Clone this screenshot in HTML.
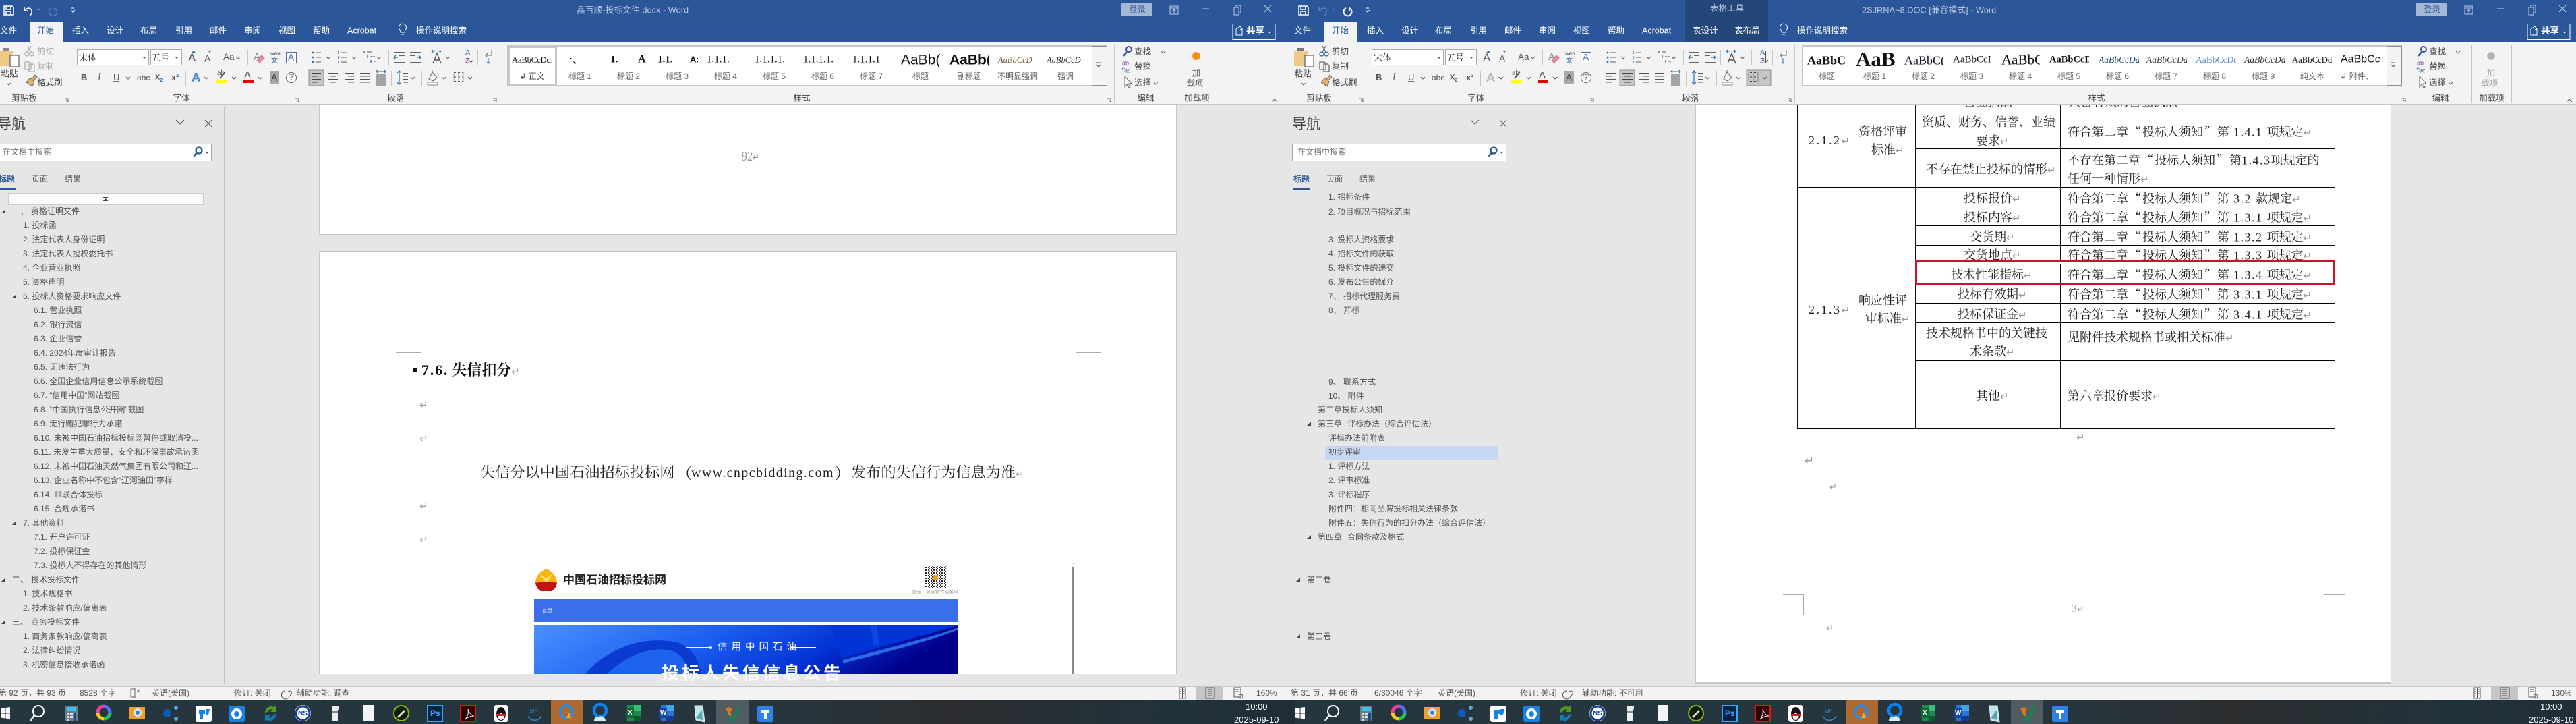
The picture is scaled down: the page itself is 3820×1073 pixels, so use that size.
<!DOCTYPE html>
<html lang="zh"><head><meta charset="utf-8"><title>Word</title>
<style>
*{box-sizing:border-box}
html,body{margin:0;padding:0;width:3820px;height:1073px;overflow:hidden;background:#e6e6e6}
body{position:relative;font-family:"Liberation Sans","Noto Sans CJK SC",sans-serif}
.w{position:absolute;top:0;width:1900px;height:1073px}
.a{position:absolute}
svg.a{overflow:visible}
p{position:absolute;margin:0;transform:translateY(-50%);white-space:nowrap;line-height:1.2;font-size:12.5px;color:#444}
.tt{color:#fff}
.lb{color:#666;font-size:12px;transform:translate(-50%,-50%)}
.g{color:#444;font-size:12.5px;transform:translate(-50%,-50%)}
.d{color:#a5a5a5}
.n{color:#555;font-size:12px}
.st{color:#555;font-size:12px}
.sm{font-family:"Liberation Serif","Noto Serif CJK SC",serif;overflow:hidden;color:#111;line-height:1.3}
.tri{position:absolute;width:0;height:0;border-left:6px solid transparent;border-bottom:6px solid #444}
.s{font-family:"Liberation Serif","Noto Serif CJK SC",serif;font-size:18px;color:#222}
.s.c{text-align:center}
.r{color:#999;font-family:"DejaVu Sans",sans-serif;font-size:15px;font-weight:400;font-style:normal}
em{font-style:normal;font-family:"Noto Serif CJK SC",serif;margin:0 1.5px}
.k{margin:0 6px;letter-spacing:1.5px}
</style></head><body>

<svg width="0" height="0" style="position:absolute"><defs>
<pattern id="qr" width="4" height="4" patternUnits="userSpaceOnUse"><rect width="4" height="4" fill="#fff"/><rect width="2" height="2" fill="#222"/><rect x="2" y="2" width="1" height="2" fill="#333"/></pattern>
<linearGradient id="bn" x1="0" y1="0" x2="1" y2="0.2"><stop offset="0" stop-color="#4b90ff"/><stop offset=".45" stop-color="#1b5ef0"/><stop offset=".75" stop-color="#0534d4"/><stop offset="1" stop-color="#00008a"/></linearGradient>
<g id="r" fill="none" stroke="#5c5c5c" stroke-width="1">
<path d="M105.5 66v86M449.5 66v86M741.5 66v86M1652.5 66v86M1745.5 66v86M1804.5 66v86" stroke="#c6c6c6"/>
<path d="M323.5 74v22M367.5 74v22M275.5 105v22M576.5 74v22M631.5 74v22M677.5 74v22M708.5 74v22M580.5 105v22M625.5 105v22" stroke="#c6c6c6"/>
<rect x="114.5" y="73.5" width="106" height="23" fill="#fff" stroke="#ababab"/>
<rect x="223.5" y="73.5" width="46" height="23" fill="#fff" stroke="#ababab"/>
<path d="M211 84h6l-3 3zM259 84h6l-3 3z" fill="#555" stroke="none"/>
<path d="M187 114l3 3 3-3M303 114l3 3 3-3M344 114l3 3 3-3M383 114l3 3 3-3M350 84l3 3 3-3M484 84l3 3 3-3M522 84l3 3 3-3M559 84l3 3 3-3M661 84l3 3 3-3M609 114l3 3 3-3M655 114l3 3 3-3M694 114l3 3 3-3M10 123l3 3 3-3M1722 76l3 3 3-3M1711 122l3 3 3-3"/>
<path d="M1626 96l3 3 3-3" /><path d="M1626 93h6"/>
<path d="M284 78l3-3 3 3z" fill="#2b6cb0" stroke="none"/><path d="M308 75l3 3 3-3z" fill="#2b6cb0" stroke="none"/>
<path d="M96 146h5v5M98 148l3 3M438 146h5v5M440 148l3 3M731 146h5v5M733 148l3 3M1642 146h5v5M1644 148l3 3" stroke="#666"/>
<path d="M1886 151l4-4 4 4"/>
<circle cx="464" cy="78" r="1.4" fill="#2b6cb0" stroke="none"/><circle cx="464" cy="85" r="1.4" fill="#2b6cb0" stroke="none"/><circle cx="464" cy="92" r="1.4" fill="#2b6cb0" stroke="none"/>
<path d="M468 78h8M468 85h8M468 92h8M506 78h8M506 85h8M506 92h8M544 77h7M549 84h7M554 91h4"/>
<path d="M502 76v4M502 83v4M502 90v4M540 75v4M545 82v4M550 89v4" stroke="#2b6cb0" stroke-width="1.3"/>
<path d="M584 77.5h16M592 82.5h8M592 87.5h8M584 92.5h16M608 77.5h16M608 82.5h8M608 87.5h8M608 92.5h16" stroke="#666"/>
<path d="M590 85h-6M587 82l-3 3 3 3M618 85h6M621 82l3 3-3 3" stroke="#2b6cb0" stroke-width="1.2"/>
<path d="M642 94l6-15 6 15M644.5 89h7" stroke="#555" stroke-width="1.4"/>
<path d="M640 76h5M654 76h-4M642 74l-2 2 2 2M652 74l2 2-2 2" stroke="#2b6cb0"/>
<path d="M698.5 75v17M695 89l3.5 3.5 3.5-3.5" stroke="#555"/>
<path d="M729 74v8h-8M723 79l-3 3 3 3" stroke="#666"/><path d="M724 86v8M722 92l2 2 2-2" stroke="#2b6cb0"/>
<path d="M462 108.5h14M462 113h9M462 117.5h14M462 122h9M486 108.5h15M489 113h9M486 117.5h15M489 122h9M511 108.5h14M516 113h9M511 117.5h14M516 122h9M534 108.5h14M534 113h14M534 117.5h14M534 122h14" stroke="#555"/>
<path d="M558 111h14M558 114h14M558 117h14M558 120h14M558 123h14M558 126h14" stroke="#555"/>
<path d="M558 106h14M560 104l-2 2 2 2M570 104l2 2-2 2" stroke="#2b6cb0"/>
<path d="M592 105v20M589 108l3-3 3 3M589 122l3 3 3-3" stroke="#2b6cb0" stroke-width="1.2"/>
<path d="M598 108.5h7M598 113h7M598 117.5h7M598 122h7" stroke="#555"/>
<path d="M636 117l5-10 7 8-6 5zM641 107v-3" stroke="#666"/><rect x="634" y="122" width="15" height="4" fill="#fff" stroke="#888"/>
<path d="M673 107.5h14v13h-14zM680 107.5v13M673 114h14" stroke-dasharray="1 1" stroke="#555"/><path d="M673 124.5h14" stroke="#555"/>
<rect x="321" y="119" width="16" height="4" fill="#ff0" stroke="none"/><rect x="360" y="119" width="16" height="4" fill="#e00" stroke="none"/>
<rect x="400" y="105" width="14" height="19" fill="#aaa" stroke="none"/>
<circle cx="432" cy="115" r="7.5" fill="#fff" stroke="#666"/>
<rect x="424.5" y="77.5" width="15" height="16" stroke="#4a6fa5" fill="#fff"/>
<path d="M381 90l7-8 4 4-7 7z" fill="#e98ca0" stroke="#d0708a"/>
<path d="M326 116l8-10" stroke="#555" stroke-width="2"/>
<circle cx="1674" cy="73" r="4" stroke="#2b579a" stroke-width="2"/><path d="M1671 77l-5 6" stroke="#2b579a" stroke-width="2.5"/>
<path d="M1668 102h-4l2-2M1664 102l2 2" stroke="#2b6cb0"/>
<path d="M1668 113v16l3-4 3 5 2-1-3-5h5z" fill="#fff" stroke="#666"/>
<path d="M45 115l6 6-3 7-9-6zM47 117l5-6 3 3-5 5" fill="#e0b070" stroke="#555" stroke-width=".8"/>
</g>
<g id="tb">
<path d="M1 1050l6.5-1v7h-6.5zM8.5 1049l6.5-1v8h-6.5zM1 1057.5h6.5v7l-6.5-1zM8.5 1057.5h6.5v8l-6.5-1z" fill="#fff"/>
<circle cx="57" cy="1054" r="8" fill="none" stroke="#fff" stroke-width="2"/><path d="M51 1060l-6 8" stroke="#fff" stroke-width="2.5"/>
<rect x="97" y="1046" width="18" height="23" fill="#6d7e8b"/><rect x="99" y="1048" width="14" height="5" fill="#39c5e8"/><path d="M99 1056h4v3h-4zM104 1056h4v3h-4zM99 1061h4v3h-4zM104 1061h4v3h-4zM99 1065h4v3h-4z" fill="#dde"/><path d="M109 1056h4v12h-4z" fill="#174a80"/>
<g fill="none" stroke-width="5"><circle cx="154" cy="1056" r="9" stroke="#23c55e" stroke-dasharray="14 43"/><circle cx="154" cy="1056" r="9" stroke="#f6c915" stroke-dasharray="14 43" stroke-dashoffset="-14"/><circle cx="154" cy="1056" r="9" stroke="#ee3d96" stroke-dasharray="14 43" stroke-dashoffset="-28"/><circle cx="154" cy="1056" r="9" stroke="#5b6ef0" stroke-dasharray="15 43" stroke-dashoffset="-42"/></g>
<rect x="192" y="1048" width="23" height="18" fill="#f1a02c"/><circle cx="204" cy="1056" r="6" fill="#dfe8f2"/><circle cx="204" cy="1056" r="3" fill="#3c7cc6"/>
<circle cx="248" cy="1057" r="6" fill="#0b5cb8"/><circle cx="261" cy="1049" r="3" fill="#5aa9dc"/><circle cx="261" cy="1065" r="3" fill="#5aa9dc"/>
<rect x="290" y="1046" width="24" height="24" rx="3" fill="#fff"/><path d="M295 1052h9v6h-3v7h-5v-7h-1zM305 1051h6l-2 8h-4z" fill="#1483e4"/>
<rect x="339" y="1046" width="24" height="24" rx="3" fill="#1c82e2"/><circle cx="351" cy="1058" r="6" fill="none" stroke="#fff" stroke-width="4"/>
<path d="M393 1056a9 9 0 0 1 13-8l3-2v9h-8l3-3a5 5 0 0 0-7 3" fill="#4f9a1a"/><path d="M409 1058a9 9 0 0 1-13 9l-3 2v-9h8l-3 3a5 5 0 0 0 7-3" fill="#0f7fb0"/>
<circle cx="449" cy="1057" r="12" fill="#fff"/><circle cx="449" cy="1057" r="10" fill="none" stroke="#123d94" stroke-width="3"/>
<path d="M492 1047h11v4l-2 1v17h-8v-17l-1-1z" fill="#eee"/><path d="M493 1054h8v3h-8z" fill="#888"/>
<rect x="539" y="1045" width="15" height="24" fill="#f4f4f4"/>
<circle cx="595" cy="1057" r="11" fill="#141a10" stroke="#7cc20b" stroke-width="2"/><path d="M589 1062l10-10 2 2-10 10z" fill="#d9e8c0"/>
<rect x="634" y="1046" width="22" height="23" fill="#06233d" stroke="#31a8ff" stroke-width="2"/>
<rect x="683" y="1046" width="22" height="23" fill="#2a0504" stroke="#e0180e" stroke-width="2"/><path d="M690 1066c4-5 5-10 4-15 2 6 5 9 9 10-5 0-9 1-13 5" fill="none" stroke="#eee"/>
<rect x="732" y="1045" width="22" height="25" rx="4" fill="#fff"/><ellipse cx="743" cy="1058" rx="7" ry="10" fill="#111"/><ellipse cx="743" cy="1062" rx="4.5" ry="5" fill="#fff"/><path d="M736 1058h14v3h-14z" fill="#e02020"/>
<path d="M783 1061a11 11 0 0 0 20 0" fill="none" stroke="#2c8ac8" stroke-width="1.5"/>
<rect x="817" y="1038" width="48" height="35" fill="#ac6a32"/>
<circle cx="840" cy="1055" r="9" fill="none" stroke="#2a8de8" stroke-width="3.5"/><path d="M840 1064l4-8 3 8z" fill="#f6b21a"/><path d="M844 1064h6l-3 5z" fill="#e2561e"/>
<circle cx="890" cy="1053" r="9" fill="none" stroke="#0a84f0" stroke-width="4.5"/><path d="M881 1068c0-5 4-6 7-5 2-3 9-2 10 5z" fill="#d7eefc"/>
<rect x="930" y="1045" width="20" height="24" fill="#1f8a4c"/><path d="M940 1045h10v8h-10z" fill="#36c07a"/><path d="M940 1061h10v8h-10z" fill="#10592e"/><rect x="928" y="1050" width="12" height="14" fill="#0e6b37"/>
<rect x="980" y="1045" width="20" height="24" fill="#2a72d4"/><path d="M988 1045h12v8h-12z" fill="#41a5ee"/><path d="M988 1061h12v8h-12z" fill="#103f91"/><rect x="977" y="1050" width="12" height="14" fill="#17479e"/>
<path d="M1030 1046h12l3 24-13-3z" fill="#bfe5ea" stroke="#e6eef0"/><path d="M1032 1064l10 3-1-15z" fill="#5aa5b5"/>
<rect x="1062" y="1038" width="48" height="35" fill="#4f5d63"/>
<path d="M1083 1052v14c0 3 6 3 6-1l7-18" fill="none" stroke="#0e8a4a" stroke-width="3"/><path d="M1076 1050c3-2 7-2 10 0l-3 5 2 6c-4 0-6-3-6-6z" fill="#e2741a"/>
<rect x="1123" y="1046" width="24" height="24" rx="3" fill="#2f80e9"/><path d="M1129 1052h12v4h-4v9h-4v-9h-4z" fill="#fff"/>
</g>
</defs></svg>

<!-- ======= WINDOW 1 ======= -->
<div class="w" style="left:0">
<div class="a" style="left:0;top:0;width:1910px;height:62px;background:#2b579a"></div>
<div class="a" style="left:0;top:62px;width:1910px;height:94px;background:#f3f3f3;border-bottom:2px solid #c6c6c6"></div>
<div class="a" style="left:44px;top:32px;width:49px;height:30px;background:#f3f3f3"></div>
<svg class="a" style="left:0;top:0" width="1910" height="62" fill="none" stroke="#fff" stroke-width="1.5">
<path d="M6 9h12l2 2v11H6zM9 9v5h7V9M9 22v-5h7v5"/>
<path d="M36 11v5h5M37 15c3-4 9-4 10 1 1 3-1 6-3 7"/><path d="M55 13l2 2 2-2" stroke="#8fa6ca" stroke-width="1"/>
<path d="M76 12a6 6 0 1 0 5 0v4" stroke="#5d7fb3"/>
<path d="M106 12h4M105 15l3 3 3-3" stroke-width="1"/>
<path d="M592 43a5.5 5.5 0 1 1 10 0c-1 2-2 3-2 5h-6c0-2-1-3-2-5zM595 51h4" stroke-width="1"/>
<path d="M1735 9h12v12h-12zM1735 12h12M1741 20v-6M1738 17l3-3 3 3" stroke="#bcc9df" stroke-width="1"/>
<path d="M1783 13h10M1830 11h7v11h-7zM1833 11v-3h7v11h-3M1875 8l10 10M1885 8l-10 10" stroke="#bcc9df" stroke-width="1"/>
<rect x="1828" y="35.5" width="63" height="23" stroke="#fff" stroke-width="1"/>
<path d="M1833 52v-9l6-4 3 4-3 1h3v8zM1881 47l2 2 2-2" stroke-width="1"/>
</svg>
<svg class="a" style="left:0;top:0" width="1910" height="160"><use href="#r"/>
<rect x="458" y="104" width="22" height="23" fill="#c6c6c6" stroke="#8f8f8f"/>
<path d="M462 108.5h14M462 113h9M462 117.5h14M462 122h9" stroke="#444"/>
<rect x="-1" y="75" width="20" height="23" fill="#efc988"/><rect x="4" y="71" width="10" height="5" fill="#888"/><rect x="15" y="82" width="13" height="17" fill="#fff" stroke="#444"/>
<g fill="none" stroke="#b0b0b0" stroke-width="1.3"><circle cx="40" cy="80" r="3"/><circle cx="47" cy="80" r="3"/><path d="M41 77l5-9M46 77l-5-9"/><path d="M37 92h7l2 2v9h-9zM43 95h6l2 2v9h-8z"/></g>
<rect x="753" y="68" width="888" height="59" fill="#fff" stroke="#c6c6c6" stroke-width="2"/>
<rect x="754.5" y="69.5" width="70" height="56" fill="#fff" stroke="#c6c6c6" stroke-width="3"/>
<rect x="1619.5" y="68.5" width="22" height="58" fill="#f3f3f3" stroke="#8f8f8f"/>
<path d="M1626 93h6M1626 96l3 3 3-3" fill="none" stroke="#555"/>
<circle cx="1774" cy="83" r="6" fill="#f7921e"/>
<rect x="1663" y="5" width="46" height="19" fill="#a4b7d3"/>
</svg>

<p class="tt" style="left:0;top:46px">文件</p><p style="left:55px;top:46px;color:#2b579a">开始</p>
<p class="tt" style="left:107px;top:46px">插入</p><p class="tt" style="left:158px;top:46px">设计</p><p class="tt" style="left:208px;top:46px">布局</p><p class="tt" style="left:260px;top:46px">引用</p><p class="tt" style="left:311px;top:46px">邮件</p><p class="tt" style="left:362px;top:46px">审阅</p><p class="tt" style="left:413px;top:46px">视图</p><p class="tt" style="left:464px;top:46px">帮助</p><p class="tt" style="left:515px;top:46px">Acrobat</p><p class="tt" style="left:617px;top:46px">操作说明搜索</p>
<p style="left:855px;top:15px;color:#b9c7dd;font-size:12.8px">鑫百顺-投标文件.docx  -  Word</p>
<p style="left:1674px;top:14.5px;color:#2b579a;font-size:12.5px">登录</p>
<p class="tt" style="left:1848px;top:46px;font-weight:700;font-size:13.5px">共享</p>

<p class="g" style="left:14px;top:110px">粘贴</p>
<p class="d" style="left:55px;top:77px">剪切</p><p class="d" style="left:55px;top:99px">复制</p><p style="left:55px;top:123px">格式刷</p>
<p class="g" style="left:36px;top:146px">剪贴板</p><p class="g" style="left:269px;top:146px">字体</p><p class="g" style="left:587px;top:146px">段落</p><p class="g" style="left:1189px;top:146px">样式</p><p class="g" style="left:1699px;top:146px">编辑</p><p class="g" style="left:1775px;top:146px">加载项</p>

<p style="left:117px;top:85px;font-size:13px;color:#222;font-family:'Noto Serif CJK SC',serif">宋体</p><p style="left:225px;top:85px;font-size:13px;color:#222;font-family:'Noto Serif CJK SC',serif">五号</p>
<p style="left:279px;top:86px;font-size:17px;color:#555">A</p><p style="left:303px;top:87px;font-size:14px;color:#555">A</p><p style="left:331px;top:85px;font-size:13.5px;color:#555">Aa</p><p style="left:376px;top:85px;font-size:15px;color:#888">A</p><p style="left:401px;top:80px;font-size:8px;color:#444">wén</p><p style="left:402px;top:91px;font-size:10px;color:#2b6cb0">文</p><p style="left:427px;top:85px;font-size:14px;color:#4a6fa5">A</p>
<p style="left:120px;top:115px;font-weight:700;color:#555;font-size:13px">B</p><p style="left:145px;top:115px;font-style:italic;color:#555;font-family:'Liberation Serif';font-size:14px">I</p><p style="left:168px;top:115px;text-decoration:underline;color:#555;font-size:13px">U</p><p style="left:203px;top:115px;font-size:12px;color:#555;text-decoration:line-through">abc</p><p style="left:230px;top:115px;font-size:13px;font-weight:700;color:#555">x<sub style="font-size:7px;color:#2b6cb0">2</sub></p><p style="left:254px;top:115px;font-size:13px;font-weight:700;color:#555">x<sup style="font-size:7px;color:#2b6cb0">2</sup></p>
<p style="left:285px;top:115px;font-size:17px;color:#fff;-webkit-text-stroke:1px #2b6cb0;text-shadow:0 0 3px #9cc3ea">A</p><p style="left:322px;top:109px;font-size:10px;color:#555">ab</p><p style="left:362px;top:112px;font-size:15px;color:#444">A</p><p style="left:402px;top:115px;font-size:14px;color:#333">A</p><p style="left:427.5px;top:115px;font-size:9px;color:#555">字</p>
<p style="left:690px;top:79px;font-size:11px;color:#2b6cb0">A</p><p style="left:690px;top:91px;font-size:11px;color:#7a3fb0">Z</p>
<p style="left:1664px;top:94px;font-size:9px;color:#7a3fb0">ab</p><p style="left:1667px;top:105px;font-size:9px;color:#2b6cb0">ac</p>
<p style="left:1682px;top:77px">查找</p><p style="left:1682px;top:99px">替换</p><p style="left:1682px;top:123px">选择</p>
<p class="g" style="left:1774px;top:109px;color:#555">加</p><p class="g" style="left:1772px;top:124px;color:#555">载项</p>

<!-- gallery window 1 -->
<p class="sm" style="left:759px;top:89px;width:60px;font-size:12.7px;letter-spacing:-.2px;color:#111">AaBbCcDdI</p>
<p class="sm" style="left:834px;top:88px;width:30px;font-size:15px;font-weight:700;font-family:'Noto Serif CJK SC',serif">一、</p>
<p class="sm" style="left:905px;top:89px;width:20px;font-size:15px;font-weight:700">1.</p><p class="sm" style="left:946px;top:89px;width:14px;font-size:16px;font-weight:700">A</p>
<p class="sm" style="left:975px;top:89px;width:30px;font-size:15px;font-weight:700">1.1.</p><p class="sm" style="left:1023px;top:89px;width:12px;font-size:13px;font-weight:700;font-family:'Liberation Sans'">A:</p>
<p class="sm" style="left:1048px;top:89px;width:46px;font-size:15px">1.1.1.</p><p class="sm" style="left:1119px;top:89px;width:60px;font-size:15px">1.1.1.1.</p><p class="sm" style="left:1191px;top:89px;width:60px;font-size:15px">1.1.1.1.</p><p class="sm" style="left:1264px;top:89px;width:58px;font-size:15px">1.1.1.1</p>
<p class="sm" style="left:1336px;top:89px;width:58px;font-size:21px;font-family:'Liberation Sans'">AaBb(</p><p class="sm" style="left:1408px;top:89px;width:58px;font-size:21px;font-family:'Liberation Sans';font-weight:700">AaBb(</p>
<p class="sm" style="left:1480px;top:89px;width:59px;font-size:12.5px;font-style:italic;color:#7a5a40">AaBbCcD</p><p class="sm" style="left:1552px;top:89px;width:58px;font-size:12.5px;font-style:italic;color:#333">AaBbCcD</p>
<p class="lb" style="left:789px;top:113px;color:#444">↲ 正文</p><p class="lb" style="left:860px;top:113px">标题 1</p><p class="lb" style="left:932px;top:113px">标题 2</p><p class="lb" style="left:1004px;top:113px">标题 3</p><p class="lb" style="left:1076px;top:113px">标题 4</p><p class="lb" style="left:1148px;top:113px">标题 5</p><p class="lb" style="left:1220px;top:113px">标题 6</p><p class="lb" style="left:1292px;top:113px">标题 7</p><p class="lb" style="left:1365px;top:113px">标题</p><p class="lb" style="left:1437px;top:113px">副标题</p><p class="lb" style="left:1509px;top:113px">不明显强调</p><p class="lb" style="left:1580px;top:113px">强调</p>

<!-- nav window 1 -->
<div class="a" style="left:331.5px;top:159px;width:1px;height:855px;background:#c2c2c2"></div>
<p style="left:-4px;top:184px;font-size:21px;color:#444">导航</p>
<svg class="a" style="left:0;top:0" width="332" height="300" fill="none"><path d="M261 178l6 6 6-6M304 178l10 10M314 178l-10 10" stroke="#555"/>
<rect x="-3.5" y="213.5" width="317" height="25" fill="#fff" stroke="#ababab"/>
<circle cx="295" cy="223" r="4.5" stroke="#2b579a" stroke-width="2.3"/><path d="M291.5 227l-4 4.5" stroke="#2b579a" stroke-width="2.6"/><path d="M305 225l2 2 2-2" stroke="#444"/>
<rect x="-3" y="279" width="26" height="3" fill="#2b579a"/></svg>
<p style="left:4px;top:224.5px;font-size:12px;color:#777">在文档中搜索</p>
<p style="left:-2px;top:264.5px;font-size:12px;color:#2b579a;font-weight:700">标题</p><p class="n" style="left:47px;top:264.5px">页面</p><p class="n" style="left:96px;top:264.5px">结果</p>
<div class="a" style="left:12px;top:286px;width:290px;height:18px;background:#fbfbfb;border:1px solid #ccc"></div>
<svg class="a" style="left:0;top:0" width="320" height="310"><path d="M153 292h7v1.5h-7zM156.5 294l-4 4h8z" fill="#444"/></svg>
<div class="tri" style="left:2px;top:310px"></div><div class="tri" style="left:18px;top:436px"></div><div class="tri" style="left:18px;top:772px"></div><div class="tri" style="left:2px;top:856px"></div><div class="tri" style="left:2px;top:919px"></div>
<p class="n" style="left:18px;top:313px">一、</p><p class="n" style="left:46px;top:313px">资格证明文件</p>
<p class="n" style="left:34px;top:334px">1. 投标函</p><p class="n" style="left:34px;top:355px">2. 法定代表人身份证明</p><p class="n" style="left:34px;top:376px">3. 法定代表人授权委托书</p><p class="n" style="left:34px;top:397px">4. 企业营业执照</p><p class="n" style="left:34px;top:418px">5. 资格声明</p><p class="n" style="left:34px;top:439px">6. 投标人资格要求响应文件</p>
<p class="n" style="left:50px;top:460px">6.1. 营业执照</p><p class="n" style="left:50px;top:481px">6.2. 银行资信</p><p class="n" style="left:50px;top:502px">6.3. 企业信誉</p><p class="n" style="left:50px;top:523px">6.4. 2024年度审计报告</p><p class="n" style="left:50px;top:544px">6.5. 无违法行为</p><p class="n" style="left:50px;top:565px">6.6. 全国企业信用信息公示系统截图</p><p class="n" style="left:50px;top:586px">6.7. “信用中国”网站截图</p><p class="n" style="left:50px;top:607px">6.8. “中国执行信息公开网”截图</p><p class="n" style="left:50px;top:628px">6.9. 无行贿犯罪行为承诺</p><p class="n" style="left:50px;top:649px">6.10. 未被中国石油招标投标网暂停或取消投...</p><p class="n" style="left:50px;top:670px">6.11. 未发生重大质量、安全和环保事故承诺函</p><p class="n" style="left:50px;top:691px">6.12. 未被中国石油天然气集团有限公司和辽...</p><p class="n" style="left:50px;top:712px">6.13. 企业名称中不包含“辽河油田”字样</p><p class="n" style="left:50px;top:733px">6.14. 非联合体投标</p><p class="n" style="left:50px;top:754px">6.15. 合规承诺书</p>
<p class="n" style="left:34px;top:775px">7. 其他资料</p><p class="n" style="left:50px;top:796px">7.1. 开户许可证</p><p class="n" style="left:50px;top:817px">7.2. 投标保证金</p><p class="n" style="left:50px;top:838px">7.3. 投标人不得存在的其他情形</p>
<p class="n" style="left:18px;top:859px">二、</p><p class="n" style="left:46px;top:859px">技术投标文件</p><p class="n" style="left:34px;top:880px">1. 技术规格书</p><p class="n" style="left:34px;top:901px">2. 技术条款响应/偏离表</p>
<p class="n" style="left:18px;top:922px">三、</p><p class="n" style="left:46px;top:922px">商务投标文件</p><p class="n" style="left:34px;top:943px">1. 商务条款响应/偏离表</p><p class="n" style="left:34px;top:964px">2. 法律纠纷情况</p><p class="n" style="left:34px;top:985px">3. 机密信息接收承诺函</p>
</div>

<!-- ======= WINDOW 2 ======= -->
<div class="w" style="left:1920px">
<div class="a" style="left:-10px;top:0;width:1910px;height:62px;background:#2b579a"></div>
<div class="a" style="left:578px;top:0;width:124px;height:62px;background:#234779"></div>
<div class="a" style="left:-10px;top:62px;width:1910px;height:94px;background:#f3f3f3;border-bottom:2px solid #c6c6c6"></div>
<div class="a" style="left:44px;top:32px;width:49px;height:30px;background:#f3f3f3"></div>
<svg class="a" style="left:0;top:0" width="1900" height="62" fill="none" stroke="#fff" stroke-width="1.5">
<path d="M6 9h12l2 2v11H6zM9 9v5h7V9M9 22v-5h7v5"/>
<path d="M36 11v5h5M37 15c3-4 9-4 10 1 1 3-1 6-3 7" stroke="#5d7fb3"/><path d="M55 13l2 2 2-2" stroke="#5d7fb3" stroke-width="1"/>
<path d="M76 12a6 6 0 1 0 5 0v4" stroke-width="2"/>
<path d="M106 12h4M105 15l3 3 3-3" stroke-width="1"/>
<path d="M720 43a5.5 5.5 0 1 1 10 0c-1 2-2 3-2 5h-6c0-2-1-3-2-5zM723 51h4" stroke-width="1"/>
<path d="M1735 9h12v12h-12zM1735 12h12M1741 20v-6M1738 17l3-3 3 3" stroke="#bcc9df" stroke-width="1"/>
<path d="M1783 13h10M1830 11h7v11h-7zM1833 11v-3h7v11h-3M1875 8l10 10M1885 8l-10 10" stroke="#bcc9df" stroke-width="1"/>
<rect x="1828" y="35.5" width="63" height="23" stroke="#fff" stroke-width="1"/>
<path d="M1833 52v-9l6-4 3 4-3 1h3v8zM1881 47l2 2 2-2" stroke-width="1"/>
</svg>
<svg class="a" style="left:0;top:0" width="1900" height="160"><use href="#r"/>
<rect x="482" y="104" width="22" height="23" fill="#c6c6c6" stroke="#8f8f8f"/>
<path d="M486 108.5h15M489 113h9M486 117.5h15M489 122h9" stroke="#444"/>
<rect x="670" y="104" width="36" height="23" fill="#c6c6c6" stroke="#8f8f8f"/>
<path d="M673 107.5h14v13h-14zM680 107.5v13M673 114h14" stroke-dasharray="1 1" stroke="#444" fill="none"/><path d="M673 124.5h14M694 114l3 3 3-3" stroke="#444" fill="none"/>
<rect x="-1" y="75" width="20" height="23" fill="#efc988"/><rect x="4" y="71" width="10" height="5" fill="#777"/><rect x="15" y="82" width="13" height="17" fill="#fff" stroke="#444"/>
<g fill="none" stroke-width="1.3"><circle cx="40" cy="80" r="3" stroke="#2b6cb0"/><circle cx="47" cy="80" r="3" stroke="#2b6cb0"/><path d="M41 77l5-9M46 77l-5-9" stroke="#777"/><path d="M37 92h7l2 2v9h-9zM43 95h6l2 2v9h-8z" stroke="#666"/></g>
<rect x="753" y="68" width="888" height="59" fill="#fff" stroke="#c6c6c6" stroke-width="2"/>
<rect x="1619.5" y="68.5" width="22" height="58" fill="#f3f3f3" stroke="#8f8f8f"/>
<path d="M1626 93h6M1626 96l3 3 3-3" fill="none" stroke="#555"/>
<circle cx="1774" cy="83" r="6" fill="#b5b5b5"/>
<rect x="1663" y="5" width="46" height="19" fill="#a4b7d3"/>
</svg>

<p class="tt" style="left:-1px;top:46px">文件</p><p style="left:55px;top:46px;color:#2b579a">开始</p>
<p class="tt" style="left:107px;top:46px">插入</p><p class="tt" style="left:158px;top:46px">设计</p><p class="tt" style="left:208px;top:46px">布局</p><p class="tt" style="left:260px;top:46px">引用</p><p class="tt" style="left:311px;top:46px">邮件</p><p class="tt" style="left:362px;top:46px">审阅</p><p class="tt" style="left:413px;top:46px">视图</p><p class="tt" style="left:464px;top:46px">帮助</p><p class="tt" style="left:515px;top:46px">Acrobat</p>
<p class="tt" style="left:590px;top:46px">表设计</p><p class="tt" style="left:652px;top:46px">表布局</p><p class="tt" style="left:745px;top:46px">操作说明搜索</p>
<p style="left:616px;top:13px;color:#b9c7dd;font-size:12.5px">表格工具</p>
<p style="left:841px;top:15px;color:#b9c7dd;font-size:12.8px">2SJRNA~8.DOC [兼容模式]  -  Word</p>
<p style="left:1674px;top:14.5px;color:#2b579a">登录</p>
<p class="tt" style="left:1848px;top:46px;font-weight:700;font-size:13.5px">共享</p>

<p class="g" style="left:12px;top:110px">粘贴</p>
<p style="left:55px;top:77px">剪切</p><p style="left:55px;top:99px">复制</p><p style="left:55px;top:123px">格式刷</p>
<p class="g" style="left:36px;top:146px">剪贴板</p><p class="g" style="left:269px;top:146px">字体</p><p class="g" style="left:587px;top:146px">段落</p><p class="g" style="left:1189px;top:146px">样式</p><p class="g" style="left:1699px;top:146px">编辑</p><p class="g" style="left:1775px;top:146px">加载项</p>

<p style="left:117px;top:85px;font-size:13px;color:#222;font-family:'Noto Serif CJK SC',serif">宋体</p><p style="left:225px;top:85px;font-size:13px;color:#222;font-family:'Noto Serif CJK SC',serif">五号</p>
<p style="left:279px;top:86px;font-size:17px;color:#555">A</p><p style="left:303px;top:87px;font-size:14px;color:#555">A</p><p style="left:331px;top:85px;font-size:13.5px;color:#555">Aa</p><p style="left:376px;top:85px;font-size:15px;color:#888">A</p><p style="left:401px;top:80px;font-size:8px;color:#444">wén</p><p style="left:402px;top:91px;font-size:10px;color:#2b6cb0">文</p><p style="left:427px;top:85px;font-size:14px;color:#4a6fa5">A</p>
<p style="left:120px;top:115px;font-weight:700;color:#555;font-size:13px">B</p><p style="left:145px;top:115px;font-style:italic;color:#555;font-family:'Liberation Serif';font-size:14px">I</p><p style="left:168px;top:115px;text-decoration:underline;color:#555;font-size:13px">U</p><p style="left:203px;top:115px;font-size:12px;color:#555;text-decoration:line-through">abc</p><p style="left:230px;top:115px;font-size:13px;font-weight:700;color:#555">x<sub style="font-size:7px;color:#2b6cb0">2</sub></p><p style="left:254px;top:115px;font-size:13px;font-weight:700;color:#555">x<sup style="font-size:7px;color:#2b6cb0">2</sup></p>
<p style="left:285px;top:115px;font-size:17px;color:#f6f6f6;-webkit-text-stroke:1px #a8a8a8">A</p><p style="left:322px;top:109px;font-size:10px;color:#555">ab</p><p style="left:362px;top:112px;font-size:15px;color:#444">A</p><p style="left:402px;top:115px;font-size:14px;color:#333">A</p><p style="left:427.5px;top:115px;font-size:9px;color:#555">字</p>
<p style="left:690px;top:79px;font-size:11px;color:#2b6cb0">A</p><p style="left:690px;top:91px;font-size:11px;color:#7a3fb0">Z</p>
<p style="left:1664px;top:94px;font-size:9px;color:#7a3fb0">ab</p><p style="left:1667px;top:105px;font-size:9px;color:#2b6cb0">ac</p>
<p style="left:1682px;top:77px">查找</p><p style="left:1682px;top:99px">替换</p><p style="left:1682px;top:123px">选择</p>
<p class="g d" style="left:1774px;top:109px;color:#a5a5a5">加</p><p class="g d" style="left:1772px;top:124px;color:#a5a5a5">载项</p>

<p class="sm" style="left:760px;top:90px;width:58px;font-size:18px;font-weight:700">AaBbC(</p>
<p class="sm" style="left:832px;top:87px;width:59px;font-size:31px;font-weight:700;height:38px">AaBl</p>
<p class="sm" style="left:904px;top:90px;width:58px;font-size:18px;color:#112">AaBbC(</p>
<p class="sm" style="left:976px;top:89px;width:59px;font-size:15px">AaBbCcI</p>
<p class="sm" style="left:1048px;top:89px;width:57px;font-size:21px">AaBbC(</p>
<p class="sm" style="left:1119px;top:89px;width:59px;font-size:14.5px;font-weight:700">AaBbCcD</p>
<p class="sm" style="left:1192px;top:89px;width:60px;font-size:13.5px;font-style:italic;color:#2a4f80">AaBbCcDd.</p>
<p class="sm" style="left:1263px;top:89px;width:60px;font-size:13.5px;font-style:italic;color:#444">AaBbCcDd.</p>
<p class="sm" style="left:1336px;top:89px;width:60px;font-size:13.5px;color:#5b8fd0">AaBbCcDd</p>
<p class="sm" style="left:1408px;top:89px;width:60px;font-size:13.5px;font-style:italic;color:#333">AaBbCcDd.</p>
<p class="sm" style="left:1479px;top:89px;width:60px;font-size:12.7px">AaBbCcDdI</p>
<p class="sm" style="left:1551px;top:89px;width:60px;font-size:16px;font-family:'Liberation Sans'">AaBbCc</p>
<p class="lb" style="left:789px;top:113px">标题</p><p class="lb" style="left:860px;top:113px">标题 1</p><p class="lb" style="left:932px;top:113px">标题 2</p><p class="lb" style="left:1004px;top:113px">标题 3</p><p class="lb" style="left:1076px;top:113px">标题 4</p><p class="lb" style="left:1148px;top:113px">标题 5</p><p class="lb" style="left:1220px;top:113px">标题 6</p><p class="lb" style="left:1292px;top:113px">标题 7</p><p class="lb" style="left:1364px;top:113px">标题 8</p><p class="lb" style="left:1436px;top:113px">标题 9</p><p class="lb" style="left:1509px;top:113px">纯文本</p><p class="lb" style="left:1575px;top:113px">↲ 附件、</p>

<!-- nav 2 -->
<div class="a" style="left:331.5px;top:159px;width:1px;height:855px;background:#c2c2c2"></div>
<p style="left:-4px;top:184px;font-size:21px;color:#444">导航</p>
<svg class="a" style="left:0;top:0" width="332" height="300" fill="none"><path d="M261 178l6 6 6-6M304 178l10 10M314 178l-10 10" stroke="#555"/>
<rect x="-3.5" y="213.5" width="317" height="25" fill="#fff" stroke="#ababab"/>
<circle cx="295" cy="223" r="4.5" stroke="#2b579a" stroke-width="2.3"/><path d="M291.5 227l-4 4.5" stroke="#2b579a" stroke-width="2.6"/><path d="M305 225l2 2 2-2" stroke="#444"/>
<rect x="-3" y="279" width="26" height="3" fill="#2b579a"/></svg>
<p style="left:4px;top:224.5px;font-size:12px;color:#777">在文档中搜索</p>
<p style="left:-2px;top:264.5px;font-size:12px;color:#2b579a;font-weight:700">标题</p><p class="n" style="left:47px;top:264.5px">页面</p><p class="n" style="left:96px;top:264.5px">结果</p>
<div class="a" style="left:45px;top:661px;width:256px;height:20px;background:#c5d7f1"></div>
<div class="tri" style="left:18px;top:625px"></div><div class="tri" style="left:18px;top:793px"></div><div class="tri" style="left:2px;top:856px"></div><div class="tri" style="left:2px;top:940px"></div>
<p class="n" style="left:50px;top:292px">1. 招标条件</p><p class="n" style="left:50px;top:313.5px">2. 项目概况与招标范围</p><p class="n" style="left:50px;top:355px">3. 投标人资格要求</p><p class="n" style="left:50px;top:376px">4. 招标文件的获取</p><p class="n" style="left:50px;top:397px">5. 投标文件的递交</p><p class="n" style="left:50px;top:418px">6. 发布公告的媒介</p><p class="n" style="left:50px;top:439px">7、 招标代理服务费</p><p class="n" style="left:50px;top:460px">8、 开标</p><p class="n" style="left:50px;top:565.5px">9、 联系方式</p><p class="n" style="left:50px;top:586.5px">10、 附件</p>
<p class="n" style="left:34px;top:607px">第二章投标人须知</p><p class="n" style="left:34px;top:628px">第三章</p><p class="n" style="left:78px;top:628px">评标办法（综合评估法）</p>
<p class="n" style="left:50px;top:649px">评标办法前附表</p><p class="n" style="left:50px;top:670px">初步评审</p><p class="n" style="left:50px;top:691px">1. 评标方法</p><p class="n" style="left:50px;top:712px">2. 评审标准</p><p class="n" style="left:50px;top:733px">3. 评标程序</p><p class="n" style="left:50px;top:754px">附件四：相同品牌投标相关法律条款</p><p class="n" style="left:50px;top:775px">附件五：失信行为的扣分办法（综合评估法）</p>
<p class="n" style="left:34px;top:796px">第四章</p><p class="n" style="left:78px;top:796px">合同条款及格式</p><p class="n" style="left:18px;top:859px">第二卷</p><p class="n" style="left:18px;top:943px">第三卷</p>
</div>

<!-- ======= DOC AREAS (global coordinates) ======= -->
<div class="a" id="doc" style="left:0;top:0;width:3820px;height:1073px;clip-path:inset(156px 0 57px 0)">
<div class="a" style="left:473px;top:156px;width:1272px;height:192px;background:#fff;border:1px solid #c6c6c6;border-top:0"></div>
<div class="a" style="left:473px;top:372px;width:1272px;height:627px;background:#fff;border:1px solid #c6c6c6;border-bottom:0"></div>
<div class="a" style="left:2514px;top:156px;width:1032px;height:857px;background:#fff;border:1px solid #c6c6c6;border-top:0;border-bottom:2px solid #c6c6c6"></div>

<svg class="a" style="left:0;top:0" width="3820" height="1073" fill="none">
<path d="M588 198.5h36.5V236M1632 198.5h-36.5V236M587 522.5h37.5V485M1633 522.5h-37.5V485" stroke="#aaa"/>
<path d="M2644 881.5h30.5V912M3477 881.5h-30.5V912" stroke="#aaa"/>
<path d="M1591.5 840v159" stroke="#888" stroke-width="3"/><path d="M1591.5 834v2" stroke="#aaa"/>
<g stroke="#000" stroke-width="1">
<path d="M2665.5 150v485.500M2743.5 150v485.500M2840.5 150v485.500M3055.5 150v485.500M3462.5 150v485.500" stroke="#111"/>
<path d="M2840 164.5h622M2840 220.5h622M2665 277.5h797M2840 305.5h622M2840 334.5h622M2840 363.5h622M2840 421.5h622M2840 449.5h622M2840 477.5h622M2840 534.5h622M2665 635.5h797"/>
</g>
</svg>

<p class="s" style="left:1100px;top:231.5px;font-size:20px;color:#999;font-family:'Liberation Serif';transform:translateY(-50%) scaleX(.8);transform-origin:left">92<span class="r">↵</span></p>
<div class="a" style="left:612px;top:546px;width:7px;height:6px;background:#111"></div>
<p class="s" style="left:625px;top:549px;font-size:22px;font-weight:700;color:#111"><span style="letter-spacing:1.8px;margin-right:5px">7.6.</span>失信扣分<span class="r">↵</span></p>
<p class="r" style="left:622px;top:599.5px">↵</p><p class="r" style="left:622px;top:649.5px">↵</p><p class="r" style="left:622px;top:749.5px">↵</p><p class="r" style="left:622px;top:799.5px">↵</p>
<p class="s" style="left:712px;top:701px;font-size:22.2px">失信分以中国石油招标投标网</p>
<p class="s" style="left:1004px;top:701px;font-size:22.2px;font-family:'Noto Serif CJK SC',serif">（</p>
<p class="s" style="left:1025px;top:701px;font-size:20px;letter-spacing:1.4px;font-family:'Liberation Serif',serif">www.cnpcbidding.com</p>
<p class="s" style="left:1238px;top:701px;font-size:22.2px;font-family:'Noto Serif CJK SC',serif">）</p>
<p class="s" style="left:1262px;top:701px;font-size:22.2px">发布的失信行为信息为准<span class="r">↵</span></p>

<svg class="a" style="left:0;top:0" width="1700" height="1000">
<path d="M810 843c-10 4-16 12-16 21h32c0-9-6-17-16-21z" fill="#f5b616"/><path d="M800 850l10 14 10-14-10 7z" fill="#f8e26a"/><path d="M794 864c5-2 27-2 32 0-1 7-6 12-9 12h-14c-3 0-8-5-9-12z" fill="#c01212"/>
<rect x="1371" y="839" width="32" height="32" fill="url(#qr)"/><rect x="1384" y="852" width="7" height="7" fill="#f0a020"/>
<rect x="792" y="888" width="629" height="34" fill="#3a6eea"/>
<rect x="792" y="927" width="629" height="72" fill="url(#bn)"/>
<path d="M868 999c32-38 82-54 122-49 30 2 45 20 50 49z" fill="#0a3ad0"/><path d="M900 999c30-28 62-40 90-36 18 3 28 16 32 36z" fill="#1e63ee"/>
<path d="M1232 927l16 48 173-48z" fill="#0034d6"/><path d="M1290 927l6 30 8-2-4-28z" fill="#0a48e0"/>
<path d="M1250 978c60-16 120-30 171-48v3c-50 20-110 34-171 50z" fill="#3e8bff" opacity=".7"/>
<path d="M1017 959.5h37M1175 959.5h35" stroke="#fff"/><circle cx="1054" cy="960" r="2" fill="#fff"/><circle cx="1175" cy="960" r="2" fill="#fff"/>
</svg>
<p style="left:835px;top:860px;font-size:17px;font-weight:700;color:#222">中国石油招标投标网</p>
<p style="left:1353px;top:879px;font-size:6.8px;color:#999">能源一号网官方服务号</p>
<p style="left:804px;top:904.5px;font-size:7.5px;color:#eee">首页</p>
<p style="left:1064px;top:960px;font-size:14.5px;letter-spacing:6px;color:#fff">信用中国石油</p>
<p style="left:981px;top:998px;font-size:26px;letter-spacing:4px;font-weight:700;color:#fff">投标人失信信息公告</p>

<p class="s" style="left:2682px;top:209px;font-size:18px;letter-spacing:2.5px">2.1.2<span class="r">↵</span></p>
<p class="s" style="left:2682px;top:460px;font-size:18px;letter-spacing:2.5px">2.1.3<span class="r">↵</span></p>
<p class="s" style="left:2756px;top:196px">资格评审</p><p class="s" style="left:2775px;top:223px">标准<span class="r">↵</span></p>
<p class="s" style="left:2756px;top:446px">响应性评</p><p class="s" style="left:2766px;top:473px">审标准<span class="r">↵</span></p>
<p class="s" style="left:2912px;top:152px">营业执照</p><p class="s" style="left:3067px;top:152px">具备有效的营业执照</p>

<p class="s" style="left:2850px;top:182px">资质、财务、信誉、业绩</p><p class="s" style="left:2930px;top:210px">要求<span class="r">↵</span></p>
<p class="s" style="left:2856px;top:252px">不存在禁止投标的情形<span class="r">↵</span></p>
<p class="s" style="left:2912px;top:295px">投标报价<span class="r">↵</span></p><p class="s" style="left:2912px;top:323px">投标内容<span class="r">↵</span></p><p class="s" style="left:2921px;top:352px">交货期<span class="r">↵</span></p><p class="s" style="left:2912px;top:379px">交货地点<span class="r">↵</span></p>
<p class="s" style="left:2903px;top:437px">投标有效期<span class="r">↵</span></p><p class="s" style="left:2903px;top:467px">投标保证金<span class="r">↵</span></p>
<p class="s" style="left:2856px;top:495px">技术规格书中的关键技</p><p class="s" style="left:2921px;top:522px">术条款<span class="r">↵</span></p><p class="s" style="left:2930px;top:588px">其他<span class="r">↵</span></p>

<p class="s" style="left:3066px;top:196px">符合第二章<em>“</em>投标人须知<em>”</em>第<span class="k">1.4.1</span>项规定<span class="r">↵</span></p>
<p class="s" style="left:3066px;top:238px">不存在第二章<em>“</em>投标人须知<em>”</em>第<span style="letter-spacing:1.5px">1.4.3</span>项规定的</p>
<p class="s" style="left:3066px;top:266px">任何一种情形<span class="r">↵</span></p>
<p class="s" style="left:3066px;top:295px">符合第二章<em>“</em>投标人须知<em>”</em>第<span class="k">3.2</span>款规定<span class="r">↵</span></p>
<p class="s" style="left:3066px;top:323px">符合第二章<em>“</em>投标人须知<em>”</em>第<span class="k">1.3.1</span>项规定<span class="r">↵</span></p>
<p class="s" style="left:3066px;top:352px">符合第二章<em>“</em>投标人须知<em>”</em>第<span class="k">1.3.2</span>项规定<span class="r">↵</span></p>
<p class="s" style="left:3066px;top:379px">符合第二章<em>“</em>投标人须知<em>”</em>第<span class="k">1.3.3</span>项规定<span class="r">↵</span></p>
<p class="s" style="left:3066px;top:437px">符合第二章<em>“</em>投标人须知<em>”</em>第<span class="k">3.3.1</span>项规定<span class="r">↵</span></p>
<p class="s" style="left:3066px;top:467px">符合第二章<em>“</em>投标人须知<em>”</em>第<span class="k">3.4.1</span>项规定<span class="r">↵</span></p>
<p class="s" style="left:3066px;top:501px">见附件技术规格书或相关标准<span class="r">↵</span></p>
<p class="s" style="left:3066px;top:588px">第六章报价要求<span class="r">↵</span></p>

<div class="a" style="left:2840px;top:385px;width:623px;height:37px;background:#fff;border:3px solid #c8112a"></div>
<svg class="a" style="left:0;top:0" width="3500" height="430"><path d="M2843 391.5h617M3055.5 392v27" stroke="#111" fill="none"/></svg>
<p class="s" style="left:2893px;top:408px">技术性能指标<span class="r">↵</span></p>
<p class="s" style="left:3066px;top:408px">符合第二章<em>“</em>投标人须知<em>”</em>第<span class="k">1.3.4</span>项规定<span class="r">↵</span></p>

<p class="r" style="left:3079px;top:648px">↵</p>
<p class="r" style="left:2676px;top:683px;font-size:17px">↵</p><p class="r" style="left:2713px;top:723px;font-size:13px">↵</p>
<p class="s" style="left:3072px;top:902px;font-size:16px;color:#999">3<span class="r" style="font-size:11px">↵</span></p>
<p class="r" style="left:2708px;top:932px;font-size:13px">↵</p>
</div>

<!-- ======= STATUS BARS ======= -->
<div class="a" style="left:0;top:1016px;width:3820px;height:22px;background:#f3f3f3;border-top:2px solid #c6c6c6"></div>
<div class="a" style="left:1774px;top:1018px;width:40px;height:20px;background:#c6c6c6"></div>
<div class="a" style="left:3694px;top:1018px;width:40px;height:20px;background:#c6c6c6"></div>
<svg class="a" style="left:0;top:0" width="3820" height="1040" fill="none" stroke="#555">
<path d="M1749 1019h9v16h-9zM1753.5 1019v16M1750 1022h2M1750 1025h2M1750 1028h2M1755 1022h2M1755 1025h2M1755 1028h2"/>
<path d="M1788 1019h13v16h-13zM1791 1022h7M1791 1025h7M1791 1028h7M1791 1031h7"/>
<path d="M1830 1019h10v14h-10zM1832 1022h6M1832 1025h6"/><circle cx="1840" cy="1032" r="3"/>
<path d="M3669 1019h9v16h-9zM3673.5 1019v16M3670 1022h2M3670 1025h2M3670 1028h2M3675 1022h2M3675 1025h2M3675 1028h2"/>
<path d="M3708 1019h13v16h-13zM3711 1022h7M3711 1025h7M3711 1028h7M3711 1031h7"/>
<path d="M3750 1019h10v14h-10zM3752 1022h6M3752 1025h6"/><circle cx="3760" cy="1032" r="3"/>
<path d="M200 1021h-6v12h6M200 1020v15M203 1022l4 4M207 1022l-4 4" stroke="#666"/>
<path d="M423 1024a6 6 0 1 0 6 8M427 1025c3-2 7 0 5 3-1 2-2 2-2 4M430 1034v1" stroke="#555"/>
<path d="M2323 1024a6 6 0 1 0 6 8M2327 1025c3-2 7 0 5 3-1 2-2 2-2 4M2330 1034v1" stroke="#555"/>
</svg>
<p class="st" style="left:-2px;top:1027px">第 92 页，共 93 页</p><p class="st" style="left:118px;top:1027px">8528 个字</p><p class="st" style="left:225px;top:1027px">英语(美国)</p><p class="st" style="left:347px;top:1027px">修订: 关闭</p><p class="st" style="left:440px;top:1027px">辅助功能: 调查</p><p class="st" style="left:1863px;top:1027px">160%</p>
<p class="st" style="left:1914px;top:1027px">第 31 页，共 66 页</p><p class="st" style="left:2038px;top:1027px">6/30046 个字</p><p class="st" style="left:2132px;top:1027px">英语(美国)</p><p class="st" style="left:2254px;top:1027px">修订: 关闭</p><p class="st" style="left:2346px;top:1027px">辅助功能: 不可用</p><p class="st" style="left:3783px;top:1027px">130%</p>

<!-- ======= TASKBARS ======= -->
<div class="a" style="left:0;top:1038px;width:1920px;height:35px;background:linear-gradient(90deg,#26363f 0,#26353e 60%,#2c2e30 73%,#22323c 90%,#1f2d37 100%)"></div>
<div class="a" style="left:1920px;top:1038px;width:1900px;height:35px;background:linear-gradient(90deg,#26363f 0,#26353e 60%,#2c2e30 73%,#22323c 90%,#1f2d37 100%)"></div>
<svg class="a" style="left:0;top:0" width="1920" height="1073"><use href="#tb"/></svg>
<svg class="a" style="left:1920px;top:0" width="1900" height="1073"><use href="#tb"/></svg>

<p style="left:442px;top:1058px;font-size:10px;font-weight:700;color:#133f95">NS</p><p style="left:2362px;top:1058px;font-size:10px;font-weight:700;color:#133f95">NS</p>
<p style="left:638px;top:1057px;font-size:12px;color:#31a8ff;font-weight:700">Ps</p><p style="left:2558px;top:1057px;font-size:12px;color:#31a8ff;font-weight:700">Ps</p>
<p style="left:785px;top:1055px;font-size:10px;font-style:italic;color:#2c8ac8">xin</p><p style="left:2705px;top:1055px;font-size:10px;font-style:italic;color:#2c8ac8">xin</p>
<p style="left:931px;top:1057px;font-size:10px;font-weight:700;color:#fff">X</p><p style="left:2851px;top:1057px;font-size:10px;font-weight:700;color:#fff">X</p>
<p style="left:979px;top:1057px;font-size:10px;font-weight:700;color:#fff">W</p><p style="left:2899px;top:1057px;font-size:10px;font-weight:700;color:#fff">W</p>
<p style="left:1847px;top:1048px;font-size:13px;color:#fff">10:00</p><p style="left:1830px;top:1067px;font-size:13px;color:#fff">2025-09-10</p>
<p style="left:3767px;top:1048px;font-size:13px;color:#fff">10:00</p><p style="left:3750px;top:1067px;font-size:13px;color:#fff">2025-09-10</p>
</body></html>
